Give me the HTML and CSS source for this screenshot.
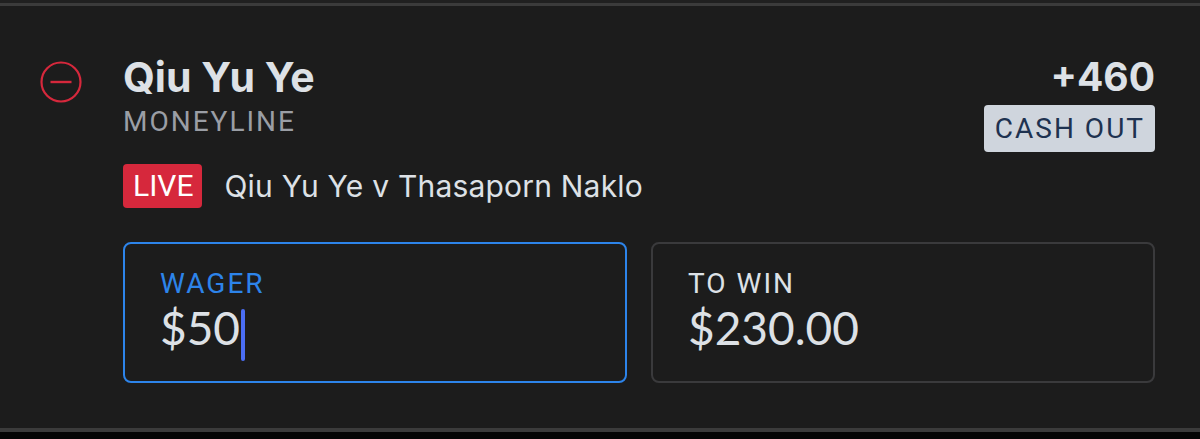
FILE: index.html
```html
<!DOCTYPE html>
<html lang="en">
<head>
  <meta charset="UTF-8" />
  <meta name="viewport" content="width=device-width, initial-scale=1.0"/>
  <title>Bet Slip</title>
  <link rel="stylesheet" href="styles.css">
</head>
<body>

  <div class="slip">
    <div class="bet">
      <div class="remove">
        <svg width="44" height="44" viewBox="0 0 44 44">
          <circle cx="22" cy="22" r="19.5" fill="none" stroke="#d6283c" stroke-width="2.2"/>
          <line x1="11.5" y1="22" x2="32.5" y2="22" stroke="#d6283c" stroke-width="2.4"/>
        </svg>
      </div>

      <div class="main">
        <div class="top-row">
          <div>
            <div class="name">Qiu Yu Ye</div>
            <div class="market">MONEYLINE</div>
          </div>
          <div class="odds-col">
            <div class="odds">+460</div>
            <div class="cash-out">CASH OUT</div>
          </div>
        </div>

        <div class="event">
          <span class="live">LIVE</span>
          <span class="match">Qiu Yu Ye v Thasaporn Naklo</span>
        </div>

        <div class="inputs">
          <div class="field active">
            <div class="label">WAGER</div>
            <div class="value">$50<span class="cursor"></span></div>
          </div>
          <div class="field">
            <div class="label">TO WIN</div>
            <div class="value">$230.00</div>
          </div>
        </div>
      </div>
    </div>
  </div>

</body>
</html>
```

FILE: styles.css
```css
* {
  box-sizing: border-box;
  margin: 0;
  padding: 0;
}

body {
  background-color: #050505;
  font-family: 'Inter', sans-serif;
  color: #dde1e6;
}

.slip {
  border-top: 3px solid #202020;
}

.bet {
  display: flex;
  background-color: #1c1c1c;
  border-top: 3px solid #3b3b3b;
  border-bottom: 4px solid #3b3b3b;
  padding: 49px 45px 45px 0;
}

.remove {
  width: 123px;
  padding: 5px 0 0 39px;
}

.remove svg {
  display: block;
}

.main {
  flex: 1;
}

.top-row {
  display: flex;
  justify-content: space-between;
}

.name {
  font-size: 41px;
  line-height: 44px;
  font-weight: bold;
  color: #dde1e6;
}

.market {
  font-family: 'Roboto', sans-serif;
  font-size: 28px;
  line-height: 32px;
  letter-spacing: 2px;
  color: #9a9ea5;
  margin-top: 7px;
}

.odds-col {
  display: flex;
  flex-direction: column;
  align-items: flex-end;
}

.odds {
  font-size: 39px;
  line-height: 44px;
  font-weight: bold;
}

.cash-out {
  margin-top: 6px;
  background-color: #cfd5dd;
  color: #1e3250;
  font-family: 'Roboto', sans-serif;
  font-size: 28px;
  line-height: 47px;
  letter-spacing: 2px;
  padding: 0 10px 0 11px;
  border-radius: 4px;
}

.event {
  display: flex;
  align-items: center;
  gap: 22px;
  margin-top: 12px;
}

.live {
  background-color: #d6283c;
  color: white;
  font-family: 'Roboto', sans-serif;
  font-size: 30px;
  line-height: 44px;
  padding: 0 9px 0 10px;
  border-radius: 4px;
}

.match {
  font-size: 30px;
  letter-spacing: 0.2px;
}

.inputs {
  display: flex;
  gap: 24px;
  margin-top: 34px;
}

.field {
  flex: 1;
  height: 141px;
  border: 2px solid #3a3a3c;
  border-radius: 8px;
  padding: 24px 35px 0;
}

.field.active {
  border-color: #2d84ea;
}

.label {
  font-family: 'Roboto', sans-serif;
  font-size: 28px;
  line-height: 32px;
  letter-spacing: 2px;
  color: #dde1e6;
}

.active .label {
  color: #2d84ea;
}

.value {
  font-family: 'Lato', sans-serif;
  font-size: 46px;
  line-height: 48px;
  margin-top: 4px;
  display: flex;
  align-items: flex-start;
}

.cursor {
  display: inline-block;
  width: 4px;
  height: 52px;
  margin: 5px 0 0 1px;
  border-radius: 2px;
  background-color: #4b6ef5;
}
```
